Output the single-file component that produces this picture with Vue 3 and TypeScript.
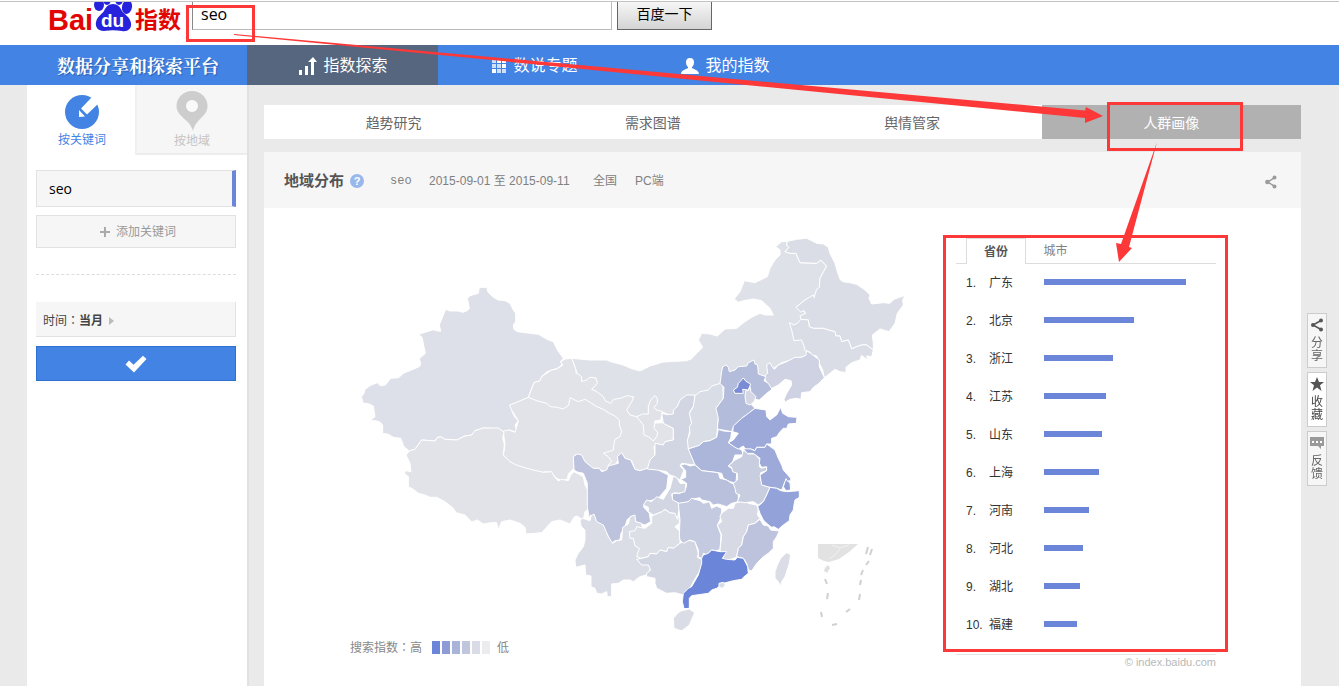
<script setup lang="ts">
import { ref } from 'vue'

interface Province {
  name: string
  fill: string
  at: [number, number]
  points: string
}

// Province outlines are drawn on sheets at triple scale; `at` is the sheet's origin.
const A: [number, number] = [350, 280]
const B: [number, number] = [540, 340]
const C: [number, number] = [690, 230]
const D: [number, number] = [400, 440]
const E: [number, number] = [620, 460]
const F: [number, number] = [660, 350]

const provinces: Province[] = [
  { name: '内蒙古', fill: '#dee1e8', at: C, points: '-355,385 -300,390 -250,390 -235,396 -200,405 -178,415 -150,423 -120,408 -80,396 -10,392 5,386 20,370 38,352 25,330 35,310 60,312 82,318 105,297 140,295 165,275 185,262 210,250 225,255 250,255 240,235 215,212 190,207 160,212 145,217 133,207 150,185 163,152 195,158 232,140 240,115 255,90 270,75 270,60 257,50 275,35 292,34 290,45 297,52 285,65 300,70 318,70 330,98 380,100 392,90 410,108 390,145 388,180 370,200 345,210 318,232 345,245 345,252 335,270 360,300 360,370 345,378 275,398 255,412 242,420 225,450 100,500 -50,560 -85,545 -125,552 -160,570 -260,520 -320,480' },
  { name: '黑龙江', fill: '#dadde6', at: C, points: '292,34 320,28 350,25 365,32 380,40 400,42 415,52 420,70 435,100 442,125 450,148 458,155 480,158 500,163 525,180 540,195 537,205 545,222 580,218 600,220 612,208 645,196 638,210 640,225 622,250 615,280 597,305 570,297 547,315 550,340 550,360 530,345 515,345 500,350 485,357 475,330 455,335 450,318 438,318 435,305 415,300 400,295 370,295 358,290 355,270 333,268 330,258 347,250 342,242 332,246 318,232 345,210 370,195 372,203 380,178 388,172 390,145 410,108 392,90 380,100 330,98 318,70 300,70 285,65 297,52 290,45' },
  { name: '吉林', fill: '#dbdde6', at: C, points: '298,278 312,285 322,280 333,268 355,270 358,290 370,295 400,295 415,300 435,305 438,318 450,318 455,335 475,330 485,357 500,350 515,345 530,345 550,360 545,380 530,378 532,390 515,376 510,390 485,398 468,412 468,428 450,425 435,418 420,430 403,443 398,420 388,400 380,378 365,375 360,366 345,362 342,348 335,330 312,332 305,300' },
  { name: '辽宁', fill: '#cfd2e2', at: C, points: '350,362 362,370 375,380 388,390 388,410 403,443 385,462 372,470 360,485 335,488 333,508 320,505 300,508 285,517 282,508 290,490 305,465 303,452 285,448 265,465 240,478 222,440 233,430 230,405 240,398 245,408 253,418 265,405 290,395 315,382 335,382 348,375' },
  { name: '新疆', fill: '#dde0e8', at: A, points: '34,350 42,340 45,328 62,316 82,308 92,318 107,314 122,295 146,293 160,280 208,260 212,252 208,236 226,220 216,172 206,163 250,149 258,152 272,154 268,135 287,88 300,93 325,93 338,97 352,92 358,85 352,55 360,47 385,40 388,22 411,22 413,35 430,52 445,60 465,62 480,70 490,90 497,100 497,125 490,135 492,148 502,155 565,163 595,180 610,185 622,210 640,235 632,245 636,254 620,266 605,270 590,276 575,290 570,302 552,308 545,325 535,352 505,367 478,376 487,383 486,395 495,412 505,422 495,435 500,448 498,457 480,450 462,457 445,446 400,444 375,452 365,465 345,468 320,480 285,478 272,470 262,472 255,483 215,480 195,508 178,513 162,500 152,475 130,472 115,463 98,460 98,435 88,425 75,422 60,422 75,410 70,378 52,370 40,370' },
  { name: '甘肃', fill: '#e2e3e8', at: B, points: '62,65 75,57 95,55 108,90 108,98 125,110 125,125 140,120 150,112 168,114 172,130 155,148 168,153 190,170 195,182 212,190 220,178 240,175 262,167 280,170 278,180 260,210 270,225 290,230 330,250 368,248 400,265 400,300 375,305 370,315 350,312 342,320 345,345 335,355 330,378 318,390 300,392 285,388 275,362 255,355 245,340 215,395 100,300 -35,172 -18,128 0,122 5,110 35,90 48,88 68,76' },
  { name: '宁夏', fill: '#e0e2e8', at: B, points: '290,230 308,222 325,222 325,198 333,178 345,167 352,175 352,190 342,203 350,210 368,215 362,240 345,243 342,265 353,278 350,290 340,303 325,290 312,285 310,255' },
  { name: '青海', fill: '#e2e3e8', at: B, points: '-92,196 -35,172 -10,182 20,190 32,200 52,202 70,207 86,196 90,173 115,185 135,178 152,188 170,200 190,208 208,220 225,228 238,240 238,255 245,275 240,290 225,298 222,310 220,330 190,340 205,350 215,365 205,375 205,395 185,392 178,385 160,385 148,378 130,362 120,345 105,345 102,385 85,402 82,418 65,422 50,415 35,400 20,395 0,398 -50,385 -85,372 -110,345 -105,315 -110,273 -93,270 -75,277 -65,242 -84,212' },
  { name: '西藏', fill: '#e2e3e8', at: D, points: '28,33 45,28 65,0 105,3 112,-7 122,-10 135,-2 170,0 195,-12 215,-15 225,-28 250,-36 295,-36 312,-23 308,-5 313,12 310,45 330,65 345,73 370,82 400,90 430,97 455,95 463,110 475,123 485,118 505,122 512,105 522,95 550,110 555,135 563,150 567,205 555,215 550,240 530,228 522,232 510,252 480,240 455,245 425,278 378,282 375,262 360,250 330,240 305,245 295,270 290,248 275,248 250,252 232,240 215,246 195,225 168,218 160,205 135,185 110,172 90,172 75,165 55,160 40,148 25,140 25,110 13,100 18,92 33,95 30,70 18,45' },
  { name: '四川', fill: '#bec3dd', at: B, points: '102,390 100,350 112,342 125,345 135,365 160,385 178,385 185,395 200,390 205,378 235,370 232,350 245,338 255,355 272,360 285,388 300,392 322,385 350,388 385,405 380,445 355,475 320,485 310,500 328,520 332,545 315,555 290,548 278,528 262,538 255,560 243,580 240,600 225,602 215,610 200,580 180,555 165,548 160,530 152,525 148,537 142,500 142,430 130,400 112,396' },
  { name: '云南', fill: '#dadde6', at: D, points: '540,240 548,235 570,242 573,228 582,222 590,245 610,255 625,290 638,310 650,302 665,300 668,262 685,252 690,230 705,225 707,245 725,250 730,285 760,350 750,390 738,405 720,410 700,425 690,420 670,420 655,430 635,432 635,470 622,470 620,455 605,462 590,460 585,445 573,440 573,408 557,405 555,375 527,382 525,360 535,340 550,320 555,300 555,270 543,258' },
  { name: '贵州', fill: '#dcdfe5', at: E, points: '125,155 135,148 150,158 170,160 178,175 178,190 165,200 180,215 180,250 160,265 145,262 140,275 120,270 110,282 90,280 85,290 65,295 50,290 58,265 45,258 40,235 30,235 28,215 45,212 50,200 75,205 95,190 95,168' },
  { name: '广西', fill: '#d2d6e2', at: E, points: '50,298 65,295 85,290 90,280 110,282 120,270 140,275 145,262 160,265 180,250 200,240 225,245 235,280 232,292 248,300 243,325 235,340 220,365 205,395 190,405 165,398 140,400 110,385 105,370 105,355 80,350 80,340 92,330 85,315 65,315' },
  { name: '陕西', fill: '#d1d6e2', at: B, points: '465,165 462,195 450,215 455,250 445,290 445,325 460,360 465,375 425,370 420,378 432,390 420,420 405,410 390,405 380,395 350,390 322,387 330,360 345,345 345,310 370,315 375,305 400,300 400,265 370,250 365,220 382,224 400,222 400,210 412,200 420,180 440,165' },
  { name: '山西', fill: '#d9dde5', at: F, points: '105,137 120,125 145,120 155,108 188,98 190,145 172,170 180,185 175,205 172,240 170,262 150,272 130,275 118,286 85,297 82,270 90,250 88,230 95,220 88,190 100,170' },
  { name: '河北', fill: '#b3bcdb', at: F, points: '198,45 205,52 208,65 225,60 235,50 260,48 265,38 282,30 285,42 293,45 295,72 318,80 312,92 325,100 336,118 320,130 298,150 285,148 275,165 285,175 260,195 245,205 218,235 215,245 172,237 175,205 168,175 190,145 192,112 180,100 185,65 188,50' },
  { name: '北京', fill: '#7a8cd5', at: F, points: '250,84 258,94 272,102 265,120 248,118 250,130 225,130 220,120 232,112 235,100' },
  { name: '天津', fill: '#d5d8e4', at: F, points: '257,122 265,122 270,110 273,125 288,140 282,155 270,165 258,160 255,140' },
  { name: '河南', fill: '#acb6da', at: F, points: '175,238 190,243 215,245 212,265 205,278 225,290 245,300 250,315 225,315 218,335 205,348 220,360 230,370 228,400 210,395 190,385 185,370 175,368 125,362 105,345 85,297 118,286 130,275 150,272 170,262' },
  { name: '湖北', fill: '#b8c0dc', at: F, points: '105,345 125,362 175,368 180,385 200,390 215,400 225,402 235,425 235,455 215,460 200,470 175,462 160,465 150,455 125,450 120,443 95,448 80,458 60,460 50,472 40,460 35,450 38,430 60,430 78,415 80,400 62,388 77,382 77,362 62,345 75,342 90,348' },
  { name: '重庆', fill: '#d1d6e2', at: E, points: '160,48 172,55 180,70 198,70 195,95 175,100 165,98 155,102 158,120 178,130 178,145 172,178 165,160 150,158 135,148 125,155 100,165 85,155 85,142 70,135 80,120 95,125 110,110 130,118 150,85' },
  { name: '湖南', fill: '#c4cadf', at: E, points: '175,130 205,125 215,115 240,122 250,130 268,125 275,145 290,138 305,145 305,155 300,180 292,195 303,225 300,270 285,272 275,270 260,285 250,280 248,295 235,292 235,270 225,245 210,240 190,250 180,240 178,225 180,180' },
  { name: '江西', fill: '#d7d9e5', at: E, points: '345,130 370,122 385,130 410,135 415,150 412,165 420,175 405,190 385,195 380,215 370,230 365,255 355,265 350,292 325,300 310,298 300,270 305,225 292,195 305,185 300,170 305,160 325,145 340,145' },
  { name: '安徽', fill: '#c8cddf', at: F, points: '250,300 265,312 285,312 300,330 298,350 305,355 320,350 320,362 302,368 302,388 308,405 330,412 320,435 310,455 295,465 280,455 255,458 232,455 240,435 228,430 225,415 220,400 232,390 232,370 218,365 215,352 205,348 225,330 245,320' },
  { name: '山东', fill: '#9ca9d9', at: F, points: '285,175 318,180 320,200 330,210 350,195 362,172 368,190 385,200 411,202 409,220 385,222 380,235 370,235 360,245 350,260 335,265 335,282 320,282 315,292 290,292 285,302 272,297 258,300 250,288 235,297 225,292 205,278 220,270 235,250 218,245 220,228 245,205 265,190' },
  { name: '江苏', fill: '#9ca9d9', at: F, points: '250,296 272,297 285,302 290,292 315,292 320,282 345,300 355,325 365,345 370,360 392,385 392,392 375,395 365,420 350,415 330,412 305,405 300,375 320,362 320,350 305,352 298,340 300,325 280,310 262,310' },
  { name: '上海', fill: '#94a3d7', at: F, points: '378,386 382,393 390,398 392,420 378,422 370,410' },
  { name: '浙江', fill: '#93a2d8', at: F, points: '330,412 350,415 362,422 380,425 418,422 418,442 405,450 402,465 400,480 390,495 388,512 370,525 355,538 342,530 335,532 320,520 310,510 300,490 293,470 310,455 320,435' },
  { name: '福建', fill: '#bdc3dd', at: E, points: '420,178 430,195 445,198 452,210 478,213 470,230 460,245 460,265 445,280 430,290 410,310 395,333 385,330 380,310 370,295 350,290 355,265 365,255 370,230 380,215 385,195 405,190' },
  { name: '广东', fill: '#6b85d8', at: E, points: '250,285 265,280 275,270 300,275 320,275 307,295 320,298 345,300 352,292 370,295 378,310 383,320 385,340 370,352 365,358 340,362 310,370 290,385 275,390 265,400 215,407 208,415 208,445 192,446 187,425 190,400 205,385 215,380 235,345 245,310 245,295' },
  { name: '香港', fill: '#d9dde5', at: E, points: '297,370 310,367 316,375 308,385 297,382' },
  { name: '海南', fill: '#dadde6', at: E, points: '208,447 224,458 208,495 185,513 162,505 160,475 175,458 185,452' },
  { name: '台湾', fill: '#dadde6', at: E, points: '500,278 512,284 508,310 495,350 485,365 482,380 475,365 465,355 465,335 472,315 482,295' },
]

const ranking = [
  { name: '广东', value: 142 },
  { name: '北京', value: 90 },
  { name: '浙江', value: 69 },
  { name: '江苏', value: 62 },
  { name: '山东', value: 58 },
  { name: '上海', value: 55 },
  { name: '河南', value: 45 },
  { name: '河北', value: 39 },
  { name: '湖北', value: 36 },
  { name: '福建', value: 33 },
]

const views = ['趋势研究', '需求图谱', '舆情管家', '人群画像']
const activeView = ref('人群画像')
const query = ref('seo')
const keyword = ref('seo')
const shades = ['#6b85d8', '#8d9cd6', '#a9b4d9', '#c0c7dd', '#d9dce6', '#ececee']
</script>

<template>
  <div class="page">
    <header class="top">
      <a class="logo" href="#" aria-label="Baidu 指数">
        <svg width="140" height="40" viewBox="48 2 140 40">
          <text x="48" y="30" class="logo-bai">Bai</text>
          <g fill="#2722dc">
            <ellipse cx="99" cy="5" rx="5" ry="6" />
            <ellipse cx="127" cy="7" rx="5" ry="7" transform="rotate(10 127 7)" />
            <ellipse cx="107" cy="-1" rx="4" ry="6" />
            <ellipse cx="119" cy="-1" rx="4" ry="6" />
            <path d="M113 4c5 0 7 3 9 7 2 3 8 6 9 12 1 6-4 9-9 8-6-1-12-1-18 0-6 0-9-4-8-9 1-5 6-8 8-11 2-4 4-7 9-7z" />
          </g>
          <text x="101" y="27" class="logo-du">du</text>
          <text x="135" y="28" class="logo-cn">指数</text>
        </svg>
      </a>
      <form class="search" @submit.prevent>
        <input v-model="query" type="text" aria-label="搜索" />
        <button type="submit">百度一下</button>
      </form>
    </header>

    <nav class="nav">
      <strong class="slogan">数据分享和探索平台</strong>
      <a class="nav-item active" href="#">
        <svg width="18" height="18" viewBox="0 0 18 18" fill="#fff">
          <path d="M0 13h3v5H0zM6 9h3v9H6zM12 18V5H9l5-5 4 5h-3v13z" />
        </svg>
        指数探索
      </a>
      <a class="nav-item" href="#">
        <svg width="16" height="14" viewBox="0 0 16 14" fill="#fff">
          <g opacity=".75"><path d="M1 0h4v4H1zM1 5h4v4H1zM6 5h4v4H6zM11 10h4v4h-4zM6 10h4v4H6z" /></g>
          <path d="M6 0h4v4H6zM11 0h4v4h-4zM11 5h4v4h-4zM1 10h4v4H1z" />
        </svg>
        数说专题
      </a>
      <a class="nav-item" href="#">
        <svg width="18" height="16" viewBox="0 0 18 16" fill="#fff">
          <path d="M9 0c3 0 4 2 4 4 0 3-1 4-2 5v1c1 1 7 2 7 6H0c0-4 6-5 7-6V9C6 8 5 7 5 4c0-2 1-4 4-4z" />
        </svg>
        我的指数
      </a>
    </nav>

    <div class="columns">
      <aside class="side">
        <div class="modes">
          <button class="mode current" type="button">
            <svg width="36" height="36" viewBox="0 0 36 36">
              <circle cx="18" cy="18" r="17" fill="#4283e4" />
              <path d="M28 3L17 14.500l6 6L36 8z" fill="#fff" />
              <path d="M15 16l6 6.500-6 .5z" fill="#fff" />
              <path d="M16 14.500l6 7" stroke="#4283e4" stroke-width="1" />
            </svg>
            按关键词
          </button>
          <button class="mode" type="button">
            <svg width="32" height="40" viewBox="0 0 32 40">
              <path d="M16 0c9 0 15.500 7 15.500 15C31.500 26 20 27 17 40 14 28 .5 26 .5 15 .5 7 7 0 16 0z" fill="#cdcdcd" />
              <circle cx="16" cy="15" r="6" fill="#fafafa" />
            </svg>
            按地域
          </button>
        </div>
        <div class="filters">
          <input v-model="keyword" class="keyword" type="text" aria-label="关键词" />
          <button class="add" type="button">
            <svg width="10" height="10" viewBox="0 0 10 10"><path d="M5 0v10M0 5h10" stroke="#aaa" stroke-width="2" /></svg>
            添加关键词
          </button>
          <hr class="divider" />
          <button class="period" type="button">
            <span>时间<span class="colon">：</span></span><b>当月</b>
            <svg width="5" height="8" viewBox="0 0 5 8"><path d="M0 0l5 4-5 4z" fill="#bbb" /></svg>
          </button>
          <button class="confirm" type="button" aria-label="确定">
            <svg width="22" height="18" viewBox="0 0 22 18">
              <path d="M.5 9.500L4 5.500l4.500 4.300L18 .8 21.500 4 9 17.500z" fill="#fff" />
            </svg>
          </button>
        </div>
      </aside>

      <main class="main">
        <div class="views">
          <button
            v-for="view in views"
            :key="view"
            type="button"
            :class="{ on: view === activeView }"
            @click="activeView = view"
          >{{ view }}</button>
        </div>

        <section class="panel">
          <header class="panel-head">
            <h2>地域分布</h2>
            <svg class="help" width="14" height="14" viewBox="0 0 14 14">
              <circle cx="7" cy="7" r="7" fill="#98b7ea" />
              <text x="7" y="11" text-anchor="middle">?</text>
            </svg>
            <span class="term">seo</span>
            <span class="range">2015-09-01 至 2015-09-11</span>
            <span class="area">全国</span>
            <span>PC端</span>
            <button class="share" type="button" aria-label="分享">
              <svg width="12" height="14" viewBox="0 0 12 14">
                <path d="M10 2.500L2.500 7 10 11.500" fill="none" stroke="#9b9b9b" stroke-width="1.500" />
                <g fill="#9b9b9b"><circle cx="9.500" cy="2.500" r="2" /><circle cx="2.300" cy="7" r="2.200" /><circle cx="9.500" cy="11.500" r="2" /></g>
              </svg>
            </button>
          </header>

          <div class="panel-body">
            <div class="map">
              <svg class="china" viewBox="350 230 560 400" role="img" aria-label="搜索指数地域分布">
                <g
                  v-for="p in provinces"
                  :key="p.name"
                  :transform="`translate(${p.at[0]} ${p.at[1]}) scale(0.33333)`"
                >
                  <polygon :points="p.points" :fill="p.fill" />
                </g>
                <g fill="none" stroke="#d0d0d0" stroke-width="2">
                  <path d="M818 544h40l-9 8-10 7-10 3-5-1-6-3z" fill="#e2e2e2" stroke="none" />
                  <path d="M832 545l8 3 9-3M840 549l-5 6-6 4" stroke="#f2f2f2" stroke-width="1" />
                  <path d="M825 568l3-3 2 3-3 5-3-2z" fill="#e0e0e0" stroke="none" />
                  <path d="M825 579l2 5M828 593l-1 6M821 612l1 5M832 625l5-1" />
                  <path d="M868 547l-2 7M872 549l-2 6M869 561l-3 4M863 570l-2 5M861 580l-1 5M860 594l-1 6M850 609l-4 3" />
                </g>
              </svg>
              <div class="legend">
                <span>搜索指数<span class="colon">：</span>高</span>
                <span class="shades"><i v-for="s in shades" :key="s" :style="{ background: s }"></i></span>
                <span>低</span>
              </div>
            </div>

            <div class="rank">
              <div class="rank-tabs">
                <button class="chosen" type="button">省份</button>
                <button type="button">城市</button>
              </div>
              <table>
                <tbody>
                  <tr v-for="(row, i) in ranking" :key="row.name">
                    <td class="num">{{ i + 1 }}.</td>
                    <td class="place">{{ row.name }}</td>
                    <td><div class="bar" :style="{ width: row.value + 'px' }"></div></td>
                  </tr>
                </tbody>
              </table>
              <p class="credit">© index.baidu.com</p>
            </div>
          </div>
        </section>
      </main>
    </div>

    <div class="tools">
      <button type="button">
        <svg width="14" height="14" viewBox="0 0 14 14">
          <path d="M11 2.500L3 7l8 4.500" fill="none" stroke="#555" stroke-width="1.500" />
          <g fill="#555"><circle cx="11" cy="2.500" r="2" /><circle cx="3" cy="7" r="2" /><circle cx="11" cy="11.500" r="2" /></g>
        </svg>
        <span>分享</span>
      </button>
      <button class="light" type="button">
        <svg width="14" height="14" viewBox="0 0 14 14">
          <path d="M7 0l2 5h5l-4 3.300L11.500 14 7 10.500 2.500 14 4 8.300 0 5h5z" fill="#555" />
        </svg>
        <span>收藏</span>
      </button>
      <button type="button">
        <svg width="14" height="14" viewBox="0 0 14 14">
          <path d="M0 1h14v9h-3v3L8 10H0z" fill="#999" />
          <path d="M2 5h2v2H2zM6 5h2v2H6zM10 5h2v2h-2z" fill="#fff" />
        </svg>
        <span>反馈</span>
      </button>
    </div>

    <svg class="marks" width="1339" height="686" viewBox="0 0 1339 686" aria-hidden="true">
      <g fill="none" stroke="#fd3838" stroke-width="3">
        <rect x="187.500" y="6.500" width="66" height="34" />
        <rect x="1108.500" y="103.500" width="133" height="46" />
        <rect x="944.500" y="236.500" width="282" height="414" />
      </g>
      <g fill="#fd3838">
        <path d="M234 34L440 52.500 1085 110.500 1086 107l17 9-18 7v-5L440 55 234 35z" />
        <path d="M1157 142l-28 105 3 1-13 14-3-19 5 1z" />
      </g>
    </svg>
  </div>
</template>

<style>
body {
  background: #eaeaea;
}
</style>

<style scoped>
.page {
  position: relative;
  box-sizing: border-box;
  min-height: 100vh;
  border-top: 1px solid #fff;
  font-family: "Liberation Sans", "Noto Sans CJK SC", sans-serif;
  font-size: 12px;
  line-height: 20px;
  color: #666;
}
.page * {
  box-sizing: border-box;
}
button,
input {
  margin: 0;
  padding: 0;
  border: 0;
  border-radius: 0;
  background: none;
  font: inherit;
  color: inherit;
}
a {
  color: inherit;
  text-decoration: none;
}
svg {
  display: block;
  flex: none;
}
.colon {
  font-family: "Noto Sans CJK TC", sans-serif;
}

.top {
  display: flex;
  height: 44px;
  padding-left: 48px;
  border-top: 1px solid #c3c3c3;
  background: #fff;
}
.logo-bai,
.logo-cn {
  fill: #e10601;
  font-weight: 700;
}
.logo-bai {
  font-size: 29px;
}
.logo-cn {
  font-family: "Noto Sans CJK SC", sans-serif;
  font-size: 23px;
}
.logo-du {
  fill: #fff;
  font-size: 19px;
  font-weight: 700;
}
.search {
  display: flex;
  gap: 5px;
  margin-left: 4px;
}
.search input {
  width: 420px;
  height: 28px;
  padding: 0 8px 4px;
  border: 1px solid #bbb;
  border-top: 0;
  border-left: 1px solid #888;
  font-family: "Open Sans", sans-serif;
  font-size: 16px;
  color: #000;
}
.search button {
  width: 95px;
  height: 28px;
  padding-bottom: 3px;
  border: 1px solid #666;
  border-top: 0;
  background: linear-gradient(#f6f6f6, #d4d4d4);
  font-size: 14px;
  color: #000;
}

.nav {
  display: flex;
  height: 40px;
  background: #4283e4;
  color: #fff;
  line-height: 40px;
}
.slogan {
  width: 247px;
  padding-left: 57px;
  font-family: "Noto Serif CJK SC", "Noto Sans CJK SC", serif;
  font-size: 18px;
  font-weight: 700;
  text-shadow: 1px 1px 1px #2c5fae;
  white-space: nowrap;
}
.nav-item {
  display: flex;
  align-items: center;
  justify-content: center;
  gap: 6px;
  width: 191px;
  padding: 2px 0 0 2px;
  font-size: 16px;
}
.nav-item.active {
  background: #56667f;
}

.columns {
  display: flex;
  min-height: calc(100vh - 85px);
  padding: 0 38px 0 27px;
}
.side {
  flex: none;
  width: 222px;
  border-right: 2px solid #e1e1e1;
  background: #fff;
}
.modes {
  display: flex;
  height: 70px;
}
.mode {
  display: flex;
  flex: 1;
  flex-direction: column;
  align-items: center;
  justify-content: flex-end;
  padding-bottom: 2px;
  border-bottom: 2px solid #ededed;
  border-left: 2px solid #f0f0f0;
  background: #f6f6f6;
  color: #c4c4c4;
}
.mode.current {
  flex: none;
  width: 108px;
  padding-bottom: 3px;
  border-color: #fff;
  background: #fff;
  color: #4283e4;
}
.filters {
  display: flex;
  flex-direction: column;
  padding: 15px 11px 0 9px;
}
.keyword {
  width: 100%;
  height: 37px;
  padding: 0 12px;
  border: 1px solid #e2e2e2;
  border-right: 4px solid #6b85d8;
  background: #f6f6f6;
  font-family: "Open Sans", sans-serif;
  font-size: 14px;
  color: #000;
}
.add {
  display: flex;
  align-items: center;
  justify-content: center;
  gap: 6px;
  height: 33px;
  margin-top: 8px;
  padding-left: 4px;
  border: 1px solid #e2e2e2;
  background: #f6f6f6;
  color: #999;
}
.divider {
  width: 100%;
  height: 0;
  margin: 26px 0 27px;
  border: 0;
  border-top: 1px dashed #ddd;
}
.period {
  display: flex;
  align-items: center;
  height: 35px;
  padding: 3px 0 0 7px;
  border-right: 1px solid #e2e2e2;
  border-bottom: 1px solid #e2e2e2;
  background: #f6f6f6;
  color: #444;
}
.period svg {
  margin-left: 6px;
}
.confirm {
  display: flex;
  align-items: center;
  justify-content: center;
  height: 35px;
  margin-top: 9px;
  border: 1px solid #2f6fd0;
  background: #4283e4;
}

.main {
  flex: 1;
  min-width: 0;
  display: flex;
  flex-direction: column;
  padding: 20px 0 0 15px;
}
.views {
  display: grid;
  grid-template-columns: repeat(4, 1fr);
  height: 34px;
  margin-bottom: 13px;
  background: #fff;
}
.views button {
  padding-top: 2px;
  font-size: 14px;
}
.views .on {
  background: #b1b1b1;
  color: #fff;
}
.panel {
  flex: 1;
  background: #fff;
}
.panel-head {
  display: flex;
  align-items: center;
  height: 56px;
  padding: 2px 24px 0 20px;
  background: #f6f6f6;
  color: #808080;
}
.panel-head h2 {
  margin: 0;
  font-size: 15px;
  font-weight: 700;
  color: #555;
}
.help {
  margin: 0 26px 0 6px;
}
.help text {
  fill: #fff;
  font-size: 11px;
  font-weight: 700;
}
.term {
  width: 39px;
  font-family: "Liberation Mono", monospace;
}
.range {
  width: 164px;
}
.area {
  width: 42px;
}
.share {
  margin-left: auto;
  padding-top: 2px;
}
.panel-body {
  display: flex;
  padding-left: 86px;
}
.map {
  flex: none;
  width: 560px;
  padding-top: 22px;
}
.china {
  width: 100%;
}
.china polygon {
  stroke: #fff;
  stroke-width: 3;
  stroke-linejoin: round;
}
.legend {
  display: flex;
  align-items: center;
  margin-top: 7px;
  color: #888;
}
.shades {
  display: flex;
  gap: 2px;
  margin: 0 7px 0 10px;
}
.shades i {
  width: 8px;
  height: 13px;
}
.rank {
  flex: none;
  width: 260px;
  margin-left: 46px;
  padding-top: 30px;
}
.rank-tabs {
  display: flex;
  height: 26px;
  padding-left: 10px;
  border-bottom: 1px solid #ddd;
}
.rank-tabs button {
  width: 59px;
  height: 25px;
  color: #808080;
}
.rank-tabs .chosen {
  width: 60px;
  height: 26px;
  border: 1px solid #ddd;
  border-bottom: 0;
  background: #fff;
  font-weight: 700;
  color: #555;
}
table {
  width: 100%;
  border-collapse: collapse;
  table-layout: fixed;
  color: #333;
}
tr {
  height: 38px;
}
td {
  padding: 0;
}
.num {
  width: 33px;
  padding-left: 10px;
}
.place {
  width: 55px;
}
.bar {
  height: 6px;
  margin-bottom: 2px;
  background: #6b85d8;
}
.credit {
  margin: 10px 0 0;
  border-top: 1px solid #e4e4e4;
  font-size: 11px;
  line-height: 15px;
  text-align: right;
  color: #b8b8b8;
}

.tools {
  position: fixed;
  top: 313px;
  right: 12px;
  display: flex;
  flex-direction: column;
  gap: 4px;
}
.tools button {
  display: flex;
  flex-direction: column;
  align-items: center;
  width: 20px;
  height: 55px;
  padding: 4px 2px 0;
  border: 1px solid #ccc;
  background: #f6f6f6;
  line-height: 13px;
}
.tools .light {
  background: #fff;
  color: #444;
}
.tools span {
  width: 12px;
  margin-top: 5px;
}
.marks {
  position: absolute;
  top: -1px;
  left: 0;
  pointer-events: none;
}
</style>
